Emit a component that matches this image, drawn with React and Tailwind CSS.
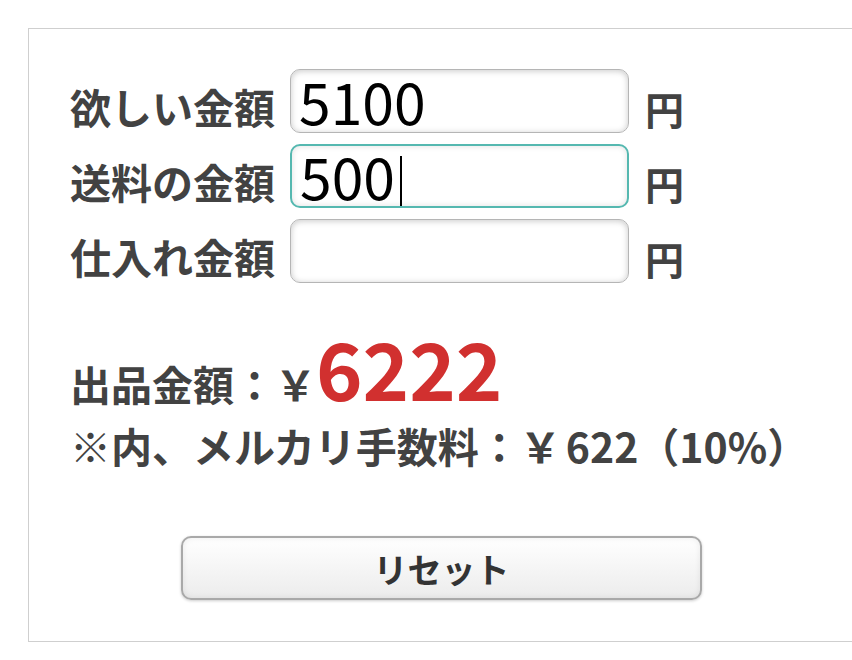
const font = { fontFamily: '"Noto Sans CJK JP", "Noto Sans", sans-serif' };

function PriceRow({ label, value, focused }) {
  return (
    <div className="flex items-start">
      <span className="mt-[17px] w-[220px] shrink-0 text-[41px] font-bold leading-none text-[#424242]">{label}</span>
      <div className="relative">
        <input
          type="text"
          defaultValue={value}
          readOnly
          className={`h-[64px] w-[339px] rounded-[10px] bg-white pl-[8px] text-[57px] text-black outline-none ${
            focused
              ? 'border-2 border-[#55b8b0] shadow-[inset_0_0_6px_rgba(0,0,0,0.12)]'
              : 'border border-[#b5b5b5] shadow-[inset_0_1px_6px_rgba(0,0,0,0.22)]'
          }`}
          style={font}
        />
        {focused && <span className="absolute left-[110px] top-[12px] h-[50px] w-[2px] bg-black" />}
      </div>
      <span className="ml-[16px] mt-[20px] text-[39px] font-bold leading-none text-[#424242]">円</span>
    </div>
  );
}

export default function App() {
  return (
    <div className="h-[660px] overflow-hidden bg-white pl-[28px] pt-[28px]" style={font}>
      <div className="flex h-[614px] flex-col border border-r-0 border-[#cfcfcf] pl-[41px] pt-[40px]">
        {/* Inputs */}
        <div className="flex flex-col gap-[11px]">
          <PriceRow label="欲しい金額" value="5100" />
          <PriceRow label="送料の金額" value="500" focused />
          <PriceRow label="仕入れ金額" value="" />
        </div>

        {/* Result */}
        <div className="mt-[44px] flex items-baseline text-[41px] font-bold leading-none text-[#424242]">
          <span>出品金額：￥</span>
          <span className="text-[79px] text-[#d1302f]">6222</span>
        </div>
        <div className="mt-[19px] text-[41px] font-bold leading-none text-[#424242]">
          ※内、メルカリ手数料：￥<span className="ml-[5px]">622（10%）</span>
        </div>

        {/* Reset */}
        <button className="ml-[111px] mt-[70px] h-[64px] w-[521px] rounded-[10px] border-2 border-[#a9a9a9] bg-gradient-to-b from-white to-[#ececec] text-[34px] font-bold text-[#333] shadow-[inset_0_0_6px_rgba(0,0,0,0.08),0_1px_3px_rgba(0,0,0,0.2)]">
          リセット
        </button>
      </div>
    </div>
  );
}
